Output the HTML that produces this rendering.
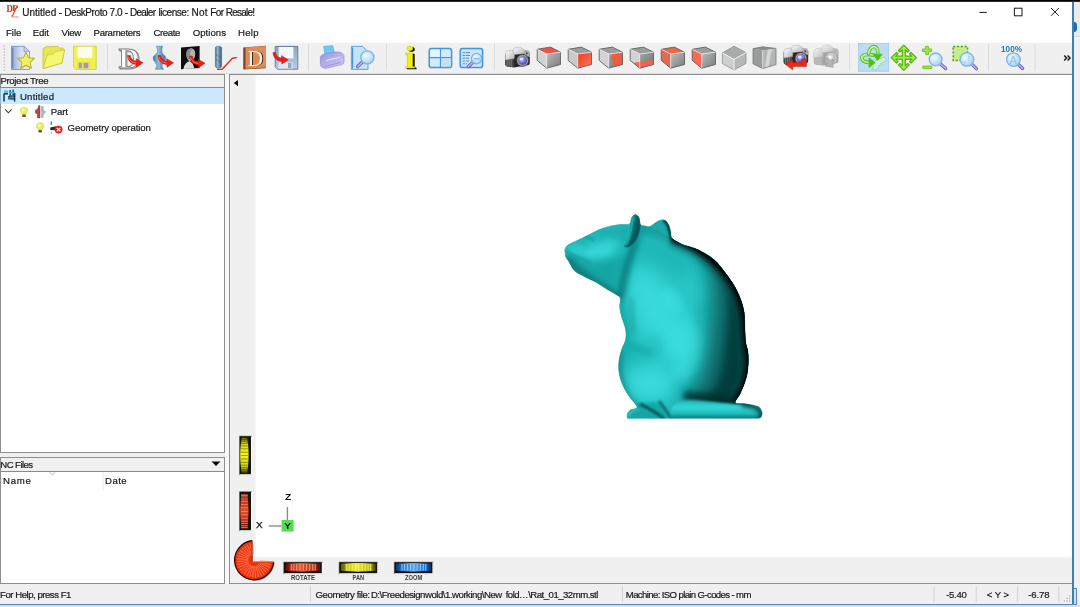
<!DOCTYPE html>
<html><head><meta charset="utf-8"><title>Untitled - DeskProto 7.0</title>
<style>
html,body{margin:0;padding:0;}
body{width:1080px;height:607px;overflow:hidden;background:#f6f6f6;position:relative;font-family:"Liberation Sans","DejaVu Sans",sans-serif;color:#151515;font-size:9.3px;}
div,svg{position:absolute;}
.t{opacity:.99;white-space:pre;line-height:12px;-webkit-text-stroke:.2px #151515;}
#win{left:0;top:0;width:1073px;height:604px;background:#f0f0f0;overflow:hidden;}
#topline{left:0;top:0;width:1080px;height:2px;background:linear-gradient(#000 0,#000 60%,#777 100%);}
#titlebar{left:0;top:0;width:1073px;height:24px;background:#fff;}
#menubar{left:0;top:24px;width:1073px;height:18px;background:#fff;}
#toolbar{left:0;top:42px;width:1073px;height:32px;background:#f0f0f0;}
#tree{left:0;top:74px;width:225px;height:379px;background:#fff;border:1px solid #8e8e8e;box-sizing:border-box;}
#treehead{left:0;top:0;width:223px;height:12px;background:#f0f0f0;border-bottom:1px solid #848a90;}
#sel{left:0;top:13px;width:223px;height:16px;background:#cce8ff;}
#nc{left:0;top:457px;width:225px;height:127px;background:#fff;border:1px solid #8e8e8e;box-sizing:border-box;}
#nchead{left:0;top:0;width:223px;height:13px;background:#f0f0f0;border-bottom:1px solid #848a90;}
#view{overflow:hidden;left:229px;top:74px;width:844px;height:510px;background:#f0f0f0;border-left:1px solid #8e8e8e;border-top:1px solid #8e8e8e;border-bottom:1px solid #8e8e8e;box-sizing:border-box;}
#canvas{left:26px;top:0;width:817px;height:482px;background:#fff;box-shadow:0 0 2px 0px #fff;}
#status{left:0;top:584px;width:1073px;height:20px;background:#f0f0f0;}
#rb{left:1072.4px;top:1px;width:1.5px;height:604px;background:#3f7fb4;}
#bb{left:0;top:603.7px;width:1077px;height:1.6px;background:#4a8cc4;}
#bg1{left:1074px;top:0;width:6px;height:36px;background:#ebebeb;border-bottom:1px solid #dcdcdc;}
#bg2{left:1074px;top:37px;width:6px;height:570px;background:#f1f1f1;}
#bg3{left:0;top:605.2px;width:1080px;height:2px;background:#dedede;}
#blob{left:1073.5px;top:21.6px;width:3.6px;height:10px;border-radius:0 4px 4px 0/0 5px 5px 0;background:#1a6eae;}
#cb{left:1074px;top:588px;width:2.8px;height:17px;border:1px solid #4a8ac0;border-left:none;box-sizing:border-box;background:#cfe2f2;}

#gap{left:225px;top:75px;width:4px;height:509px;background:#f8f8f8;}
#tb,#ov{opacity:.995;}

</style></head><body>
<div id="win">
 <div id="titlebar"></div>
 <div id="menubar"></div>
 <div id="toolbar"><svg id="tb" style="left:0;top:0" width="1073" height="32" viewBox="0 42 1073 32">
<defs>
<linearGradient id="gdoc" x1="0" y1="0" x2="1" y2="0"><stop offset="0" stop-color="#92a8d8"/><stop offset=".5" stop-color="#d4dcf0"/><stop offset="1" stop-color="#eef1f9"/></linearGradient>
<radialGradient id="lens" cx=".38" cy=".35" r=".75"><stop offset="0" stop-color="#f2faff"/><stop offset=".6" stop-color="#bfe0f6"/><stop offset="1" stop-color="#9ccbee"/></radialGradient>
<radialGradient id="lensb" cx=".4" cy=".38" r=".7"><stop offset="0" stop-color="#d0d0ff"/><stop offset=".5" stop-color="#807ce0"/><stop offset="1" stop-color="#3c3894"/></radialGradient>
<radialGradient id="lensg" cx=".4" cy=".38" r=".7"><stop offset="0" stop-color="#f0f0f0"/><stop offset=".6" stop-color="#c4c4c4"/><stop offset="1" stop-color="#a0a0a0"/></radialGradient>
<linearGradient id="gsil" x1="0" y1="0" x2="1" y2="1"><stop offset="0" stop-color="#ffffff"/><stop offset="1" stop-color="#b4b4b4"/></linearGradient><linearGradient id="gsilg" x1="0" y1="0" x2="1" y2="1"><stop offset="0" stop-color="#f4f4f4"/><stop offset="1" stop-color="#c0c0c0"/></linearGradient><linearGradient id="gfr2" x1="0" y1="0" x2="1" y2="1"><stop offset="0" stop-color="#a4a6a6"/><stop offset="1" stop-color="#707272"/></linearGradient><linearGradient id="gfr" x1="0" y1="0" x2="1" y2="1"><stop offset="0" stop-color="#bcbebe"/><stop offset="1" stop-color="#787a7a"/></linearGradient>
<linearGradient id="gred" x1="0" y1="0" x2="1" y2="1"><stop offset="0" stop-color="#ee3a1c"/><stop offset="1" stop-color="#ff7a5c"/></linearGradient>
<linearGradient id="gvase" x1="0" y1="0" x2="1" y2="0"><stop offset="0" stop-color="#4278a6"/><stop offset=".42" stop-color="#94bcdc"/><stop offset="1" stop-color="#3e7098"/></linearGradient>
<linearGradient id="gtool" x1="0" y1="0" x2="1" y2="0"><stop offset="0" stop-color="#4a7894"/><stop offset=".35" stop-color="#90b6cc"/><stop offset="1" stop-color="#345a74"/></linearGradient>
<linearGradient id="gprn" x1="0" y1="0" x2="1" y2="1"><stop offset="0" stop-color="#9a92dc"/><stop offset="1" stop-color="#d2cff4"/></linearGradient>
<linearGradient id="gflop" x1="0" y1="0" x2="0" y2="1"><stop offset="0" stop-color="#8ea6c6"/><stop offset="1" stop-color="#b9cbe0"/></linearGradient>
</defs>
<rect x="0" y="42" width="1073" height="1" fill="#fbfbfb"/>
<rect x="0" y="73.7" width="1073" height=".5" fill="#b0b0b0"/>
<rect x="3.6" y="45.5" width="1.2" height="1.2" fill="#b4b4b4"/><rect x="3.6" y="48.5" width="1.2" height="1.2" fill="#b4b4b4"/><rect x="3.6" y="51.5" width="1.2" height="1.2" fill="#b4b4b4"/><rect x="3.6" y="54.5" width="1.2" height="1.2" fill="#b4b4b4"/><rect x="3.6" y="57.5" width="1.2" height="1.2" fill="#b4b4b4"/><rect x="3.6" y="60.5" width="1.2" height="1.2" fill="#b4b4b4"/><rect x="3.6" y="63.5" width="1.2" height="1.2" fill="#b4b4b4"/><rect x="3.6" y="66.5" width="1.2" height="1.2" fill="#b4b4b4"/><rect x="3.6" y="69.5" width="1.2" height="1.2" fill="#b4b4b4"/>
<path d="M11.5,46.3 L24,46.3 L29.5,51.5 L29.5,69.5 L11.5,69.5Z" fill="url(#gdoc)" stroke="#6f8cc4" stroke-width=".8"/><path d="M24,46.3 L24,51.5 L29.5,51.5Z" fill="#c9d3ec" stroke="#6f8cc4" stroke-width=".6"/><path d="M12.8,48 L12.8,68" stroke="#5576b8" stroke-width="1"/><path d="M26,52.6 L28.3,58 L34.2,58.5 L29.7,62.3 L31.2,68.1 L26,65 L20.8,68.1 L22.3,62.3 L17.8,58.5 L23.7,58Z" fill="#eff05c" stroke="#b4b630" stroke-width="1.5" stroke-linejoin="round"/><path d="M26,54.6 L27.8,58.8 L32.2,59.2 L28.9,62 L30,66.2 L26,63.8 L22,66.2 L23.1,62 L19.8,59.2 L24.2,58.8Z" fill="#f2f362" stroke="#f2f362" stroke-width="1" stroke-linejoin="round"/>
<path d="M43,48.5 L46.5,46.8 L57.5,46.4 L60.5,48.3 L62.5,47.8 L64.2,50.3 L62,63 L43,68.6Z" fill="#e8e84e" stroke="#c2c232" stroke-width=".8" stroke-linejoin="round"/><path d="M43,68.6 L47.2,54.8 L53.5,53.8 L55.8,51.2 L64.6,49.8 L62,63Z" fill="#f7f774" stroke="#c6c636" stroke-width=".8" stroke-linejoin="round"/>
<path d="M73.5,46.2 L96.2,46.2 L96.2,69.4 L75.8,69.4 L73.5,67.2Z" fill="#f0f04e" stroke="#cfcf3a" stroke-width=".8"/><rect x="77.4" y="46.8" width="15" height="11" fill="#fdfdf4"/><rect x="77.2" y="62" width="13.2" height="6.6" fill="#e2e26a"/><rect x="78.8" y="62.8" width="3" height="5.4" fill="#a897b4"/><rect x="83.6" y="62.8" width="4.6" height="5.4" fill="#a897b4"/>
<rect x="107.0" y="44" width="1" height="27" fill="#dcdcdc"/>
<text x="119.6" y="69" font-family="Liberation Serif,serif" font-weight="bold" font-size="29" fill="#d8d8d8" stroke="#8a8a8a" stroke-width=".9" textLength="21" lengthAdjust="spacingAndGlyphs">D</text><text x="118.6" y="68.2" font-family="Liberation Serif,serif" font-weight="bold" font-size="29" fill="#fbfbfb" stroke="#7e7e7e" stroke-width=".9" textLength="21" lengthAdjust="spacingAndGlyphs">D</text>
<g transform="translate(127.5 55.5) scale(1.0)"><path d="M0,0 C0.5,5 3,8.5 9,9 L9,11.8 L15.5,7.3 L8.6,3.2 L8.8,5.6 C5.5,5.4 3.2,3.5 2.8,0Z" fill="#e8201a" stroke="#b01008" stroke-width=".5"/><path d="M1,1.5 C1.8,4.8 4,7 8.6,7.4" fill="none" stroke="#ff8a70" stroke-width=".9" opacity=".8"/></g>
<path d="M156.3,46.2 L162.6,46.2 L162.2,47.6 C161.6,49.4 161.8,51 162.2,52.4 C162.8,54.4 165.8,55.6 165.7,58 C165.6,60.4 163.4,62.4 162.4,64.4 C161.8,65.8 162,66.8 163,68 L163.4,69.3 L155.4,69.3 L155.8,68 C156.8,66.8 157,65.8 156.4,64.4 C155.4,62.4 153,60.4 153,58 C153,55.6 156.4,54.4 157.2,52.4 C157.8,51 157.6,49.4 156.8,47.6Z" fill="url(#gvase)" stroke="#4c7ca6" stroke-width=".5"/>
<g transform="translate(158 55.5) scale(1.0)"><path d="M0,0 C0.5,5 3,8.5 9,9 L9,11.8 L15.5,7.3 L8.6,3.2 L8.8,5.6 C5.5,5.4 3.2,3.5 2.8,0Z" fill="#e8201a" stroke="#b01008" stroke-width=".5"/><path d="M1,1.5 C1.8,4.8 4,7 8.6,7.4" fill="none" stroke="#ff8a70" stroke-width=".9" opacity=".8"/></g>
<path d="M181,47.4 L199.6,45.9 L199.6,68 L181,69.2Z" fill="#0c0c0c"/><path d="M187,51 C188.4,47.8 193.6,47.4 194.8,51 C195.8,54.2 195,58 193,60.4 C191.4,62 188.8,61.4 187.8,59.6 C186.2,57 186,53.4 187,51Z" fill="#b4b4b4"/><path d="M187,51 C188,48.4 191,47.6 192.6,48.6 C190.4,50.4 189.6,54 190,58.6 L188,59.8 C186.2,57 186,53.4 187,51Z" fill="#8c8c8c"/><path d="M183.4,69 C184,64.6 186.6,62 189.6,61 L192.6,63.4 L194.6,68.4Z" fill="#dadada"/>
<g transform="translate(189.5 56) scale(1.0)"><path d="M0,0 C0.5,5 3,8.5 9,9 L9,11.8 L15.5,7.3 L8.6,3.2 L8.8,5.6 C5.5,5.4 3.2,3.5 2.8,0Z" fill="#e8201a" stroke="#b01008" stroke-width=".5"/><path d="M1,1.5 C1.8,4.8 4,7 8.6,7.4" fill="none" stroke="#ff8a70" stroke-width=".9" opacity=".8"/></g>
<path d="M215.4,47.8 C215.4,45.6 221.6,45.6 221.6,47.8 L221.6,66.2 C221.6,68.8 215.4,68.8 215.4,66.2Z" fill="url(#gtool)" stroke="#385e7a" stroke-width=".5"/><path d="M215.8,54 L221.2,58 M215.8,59 L221.2,63" stroke="#2f556f" stroke-width=".7" opacity=".6"/><path d="M217.6,69.4 L222.2,69.2 L232.4,58.3 L236.4,57.6" fill="none" stroke="#e0281c" stroke-width="1.4" stroke-linejoin="round" stroke-linecap="round"/>
<path d="M243.2,47.4 L266,45.8 L266,68.2 L243.2,69.6Z" fill="#7a4a32"/><path d="M245.6,47.6 L266,46 L266,67.6 L245.6,68.8Z" fill="#e28a54"/><text x="248.6" y="66.4" font-family="Liberation Serif,serif" font-size="22.5" fill="#3a2418" textLength="15.6" lengthAdjust="spacingAndGlyphs">D</text><text x="247.6" y="66" font-family="Liberation Serif,serif" font-size="22.5" fill="#fbf6f0" textLength="15.6" lengthAdjust="spacingAndGlyphs">D</text>
<path d="M275.2,46.4 L297.8,46.4 L297.8,69.2 L277.4,69.2 L275.2,67Z" fill="url(#gflop)" stroke="#5b7696" stroke-width=".9"/><rect x="278.8" y="47" width="14.6" height="11.4" fill="#f6fafd"/><rect x="278.6" y="62.4" width="14" height="6.2" fill="#dfe8f2"/><rect x="288" y="63" width="3.4" height="5.2" fill="#8ea6c6"/>
<g transform="translate(273 52.5) scale(.98)"><path d="M0,0 C0.5,5 3,8.5 9,9 L9,11.8 L15.5,7.3 L8.6,3.2 L8.8,5.6 C5.5,5.4 3.2,3.5 2.8,0Z" fill="#e8201a" stroke="#b01008" stroke-width=".5"/></g>
<rect x="308.0" y="44" width="1" height="27" fill="#dcdcdc"/>
<path d="M323.4,46.4 L332.6,45.6 L334.6,52.6 L325,55Z" fill="#6ec6f2" stroke="#4aa6dc" stroke-width=".5"/><path d="M320.4,57.4 C320.4,55.6 322,54.6 324,54.2 L336,52 C340,51.4 344,53.4 344,56.4 L344,62 C344,63.4 343,64.2 341.6,64.6 L327.6,68 C324,68.8 320.4,67 320.4,64.4Z" fill="url(#gprn)" stroke="#8a82cc" stroke-width=".6"/><path d="M326,60.5 L340,57.2" stroke="#efeefc" stroke-width="1" opacity=".9"/><path d="M324,66.6 L341,62.4" stroke="#8078c4" stroke-width=".8" opacity=".7"/>
<path d="M351.4,46.4 L362.6,46.4 L368,51.6 L368,69.4 L351.4,69.4Z" fill="#c4e2f9" stroke="#4f9fe0" stroke-width=".9"/><path d="M352.6,47.4 L352.6,68.4" stroke="#3f8fd6" stroke-width="1.1"/>
<line x1="362.4" y1="62.1" x2="357.6" y2="66.6" stroke="#6a62c8" stroke-width="3.4" stroke-linecap="round"/><line x1="362.4" y1="62.1" x2="357.6" y2="66.6" stroke="#b4aef0" stroke-width="1.6" stroke-linecap="round"/><circle cx="367.4" cy="57.4" r="6.6" fill="url(#lens)" stroke="#7fb4e6" stroke-width="1.3"/>
<rect x="386.0" y="44" width="1" height="27" fill="#dcdcdc"/>
<text x="406.2" y="69.2" font-family="Liberation Serif,serif" font-weight="bold" font-size="31" fill="#101010" stroke="#101010" stroke-width=".5" textLength="10.5" lengthAdjust="spacingAndGlyphs">i</text><text x="404.4" y="68" font-family="Liberation Serif,serif" font-weight="bold" font-size="31" fill="#f4f400" stroke="#c8c800" stroke-width=".4" textLength="10.5" lengthAdjust="spacingAndGlyphs">i</text>
<rect x="429.2" y="48.6" width="22.4" height="19" rx="2.4" fill="#d5eafa" stroke="#3a98e4" stroke-width="1.5"/><path d="M440.4,49 L440.4,67.4 M429.4,57.6 L451.4,57.6" stroke="#3a98e4" stroke-width="1.1"/><rect x="430.4" y="49.8" width="9.2" height="7" fill="#e6f3fd"/><rect x="441.2" y="58.4" width="9.4" height="8" fill="#c4e0f8"/>
<rect x="460.2" y="48.6" width="22.4" height="19" rx="2.4" fill="#cfe6f9" stroke="#3a98e4" stroke-width="1.5"/><path d="M462.6,52.6 L470,52.6 M462.6,55.4 L470,55.4 M462.6,58.2 L469,58.2 M462.6,61 L469,61 M462.6,63.8 L467,63.8" stroke="#3f7fc4" stroke-width=".9"/><path d="M465.4,51 L465.4,65" stroke="#cfe6f9" stroke-width=".8"/>
<line x1="472.6" y1="62.4" x2="468.4" y2="66.4" stroke="#6a62c8" stroke-width="3.4" stroke-linecap="round"/><line x1="472.6" y1="62.4" x2="468.4" y2="66.4" stroke="#b4aef0" stroke-width="1.6" stroke-linecap="round"/><circle cx="476.6" cy="58.6" r="5.2" fill="url(#lens)" stroke="#7fb4e6" stroke-width="1.3"/><path d="M473.6,58.8 L479.6,58.8" stroke="#6aa8e0" stroke-width="1"/>
<rect x="494.0" y="44" width="1" height="27" fill="#dcdcdc"/>
<g transform="translate(505 47)"><path d="M0.2,7 L0.2,17 Q0.2,19 2,19.4 L9,20.4 L23.6,18 Q24.8,17.6 24.8,16 L24.8,6Z" fill="#262626"/><path d="M0.4,13 L8.6,12 L8.6,20.2 L2,19.2 Q0.4,18.8 0.4,17Z" fill="#4a4a4a"/><path d="M2.2,12.8 L2.2,19 M4.2,12.6 L4.2,19.4 M6.2,12.4 L6.2,19.8" stroke="#a8a8a8" stroke-width=".7" opacity=".7"/><path d="M0.4,6.4 Q0.6,4 3,3.5 L8,3 L9.4,6 L9.2,11.6 L0.4,13Z" fill="url(#gsil)" stroke="#a8a8a8" stroke-width=".5"/><path d="M8,3.4 L9.2,1 Q12,0 15.4,0.3 L19,2.6 L19.6,6.6 L9,7.6Z" fill="url(#gsil)" stroke="#a8a8a8" stroke-width=".5"/><path d="M19,3 L23.4,3.5 Q24.8,4 24.8,6 L24.8,10 L19.4,9Z" fill="#a8a8a8"/><rect x="21" y="5.6" width="1.6" height="1.6" fill="#3c3c3c"/><circle cx="17.6" cy="13.4" r="6" fill="#9c9c9c" stroke="#3c3c3c" stroke-width=".8"/><circle cx="17.6" cy="13.4" r="4.3" fill="url(#lensb)"/><ellipse cx="16.4" cy="12" rx="1.7" ry="1.2" fill="#fff" opacity=".7"/></g>
<polygon points="537.2,49.3 550.4,47.1 560.5,52.2 546.7,54.0" fill="#f2504a"/><polygon points="537.2,49.3 546.7,54.0 546.7,68.2 537.2,60.4" fill="#d2d4d4"/><polygon points="546.7,54.0 560.5,52.2 560.5,64.5 546.7,68.2" fill="url(#gfr)"/><polygon points="537.2,49.3 550.4,47.1 560.5,52.2 560.5,64.5 546.7,68.2 537.2,60.4" fill="none" stroke="#626262" stroke-width=".9" stroke-linejoin="round"/><polyline points="537.2,49.3 546.7,54.0 560.5,52.2" fill="none" stroke="#f4f4f4" stroke-width=".8" opacity=".85"/><line x1="546.7" y1="54.0" x2="546.7" y2="68.2" stroke="#f4f4f4" stroke-width=".8" opacity=".85"/>
<polygon points="568.2,49.3 581.4,47.1 591.5,52.2 577.7,54.0" fill="#9c9e9e"/><polygon points="568.2,49.3 577.7,54.0 577.7,68.2 568.2,60.4" fill="#c9cbcb"/><polygon points="577.7,54.0 591.5,52.2 591.5,64.5 577.7,68.2" fill="url(#gred)"/><polygon points="568.2,49.3 581.4,47.1 591.5,52.2 591.5,64.5 577.7,68.2 568.2,60.4" fill="none" stroke="#626262" stroke-width=".9" stroke-linejoin="round"/><polyline points="568.2,49.3 577.7,54.0 591.5,52.2" fill="none" stroke="#f4f4f4" stroke-width=".8" opacity=".85"/><line x1="577.7" y1="54.0" x2="577.7" y2="68.2" stroke="#f4f4f4" stroke-width=".8" opacity=".85"/>
<polygon points="599.2,49.3 612.4,47.1 622.5,52.2 608.7,54.0" fill="#9c9e9e"/><polygon points="599.2,49.3 608.7,54.0 608.7,68.2 599.2,60.4" fill="#d2d4d4"/><polygon points="608.7,54.0 622.5,52.2 622.5,64.5 608.7,68.2" fill="url(#gfr2)"/><polygon points="612,54 622.6,53.4 622.6,64.2 614.5,66.4 610.5,58" fill="#f4583c" opacity=".9" transform="translate(62.2 0) translate(-62 0)"/><polygon points="599.2,49.3 612.4,47.1 622.5,52.2 622.5,64.5 608.7,68.2 599.2,60.4" fill="none" stroke="#626262" stroke-width=".9" stroke-linejoin="round"/><polyline points="599.2,49.3 608.7,54.0 622.5,52.2" fill="none" stroke="#f4f4f4" stroke-width=".8" opacity=".85"/><line x1="608.7" y1="54.0" x2="608.7" y2="68.2" stroke="#f4f4f4" stroke-width=".8" opacity=".85"/>
<polygon points="630.2,49.3 643.4,47.1 653.5,52.2 639.7,54.0" fill="#9c9e9e"/><polygon points="630.2,49.3 639.7,54.0 639.7,68.2 630.2,60.4" fill="#d2d4d4"/><polygon points="639.7,54.0 653.5,52.2 653.5,64.5 639.7,68.2" fill="url(#gfr2)"/><polygon points="640.5,61.5 653.6,60 653.6,64.2 639.7,68.2 633,63" fill="#f4624a" opacity=".92" transform="translate(93.2 0) translate(-93 0)"/><polygon points="630.2,49.3 643.4,47.1 653.5,52.2 653.5,64.5 639.7,68.2 630.2,60.4" fill="none" stroke="#626262" stroke-width=".9" stroke-linejoin="round"/><polyline points="630.2,49.3 639.7,54.0 653.5,52.2" fill="none" stroke="#f4f4f4" stroke-width=".8" opacity=".85"/><line x1="639.7" y1="54.0" x2="639.7" y2="68.2" stroke="#f4f4f4" stroke-width=".8" opacity=".85"/>
<polygon points="661.2,49.3 674.4,47.1 684.5,52.2 670.7,54.0" fill="#e8684c"/><polygon points="661.2,49.3 670.7,54.0 670.7,68.2 661.2,60.4" fill="#e06a52"/><polygon points="670.7,54.0 684.5,52.2 684.5,64.5 670.7,68.2" fill="url(#gfr)"/><polygon points="670.8,55.2 684.6,53.2 684.6,64.2 670.8,68.2" fill="url(#gfr)" transform="translate(124.2 0) translate(-124 0)"/><polygon points="661.2,49.3 674.4,47.1 684.5,52.2 684.5,64.5 670.7,68.2 661.2,60.4" fill="none" stroke="#626262" stroke-width=".9" stroke-linejoin="round"/><polyline points="661.2,49.3 670.7,54.0 684.5,52.2" fill="none" stroke="#f4f4f4" stroke-width=".8" opacity=".85"/><line x1="670.7" y1="54.0" x2="670.7" y2="68.2" stroke="#f4f4f4" stroke-width=".8" opacity=".85"/>
<polygon points="692.2,49.3 705.4,47.1 715.5,52.2 701.7,54.0" fill="#9c9e9e"/><polygon points="692.2,49.3 701.7,54.0 701.7,68.2 692.2,60.4" fill="#fa6a50"/><polygon points="701.7,54.0 715.5,52.2 715.5,64.5 701.7,68.2" fill="url(#gfr)"/><polygon points="692.2,49.3 705.4,47.1 715.5,52.2 715.5,64.5 701.7,68.2 692.2,60.4" fill="none" stroke="#626262" stroke-width=".9" stroke-linejoin="round"/><polyline points="692.2,49.3 701.7,54.0 715.5,52.2" fill="none" stroke="#f4f4f4" stroke-width=".8" opacity=".85"/><line x1="701.7" y1="54.0" x2="701.7" y2="68.2" stroke="#f4f4f4" stroke-width=".8" opacity=".85"/>
<polygon points="734,46.2 746,52.6 734,59.4 722.4,52.8" fill="#a9abab"/><polygon points="722.4,52.8 734,59.4 734,70 722.4,63.6" fill="#cdcfcf"/><polygon points="746,52.6 734,59.4 734,70 746,63.4" fill="#b6b8b8"/><polygon points="734,46.2 746,52.6 746,63.4 734,70 722.4,63.6 722.4,52.8" fill="none" stroke="#8a8a8a" stroke-width=".7"/><path d="M722.4,52.8 L734,59.4 L746,52.6 M734,59.4 L734,70" stroke="#f6f6f6" stroke-width=".9" fill="none"/>
<polygon points="753,48.6 763,46.8 776,48.4 762.6,50.4" fill="#8c8e8e"/><polygon points="753,48.6 762.6,50.4 762.6,68.6 753,63.8" fill="#9a9c9c"/><polygon points="762.6,50.4 776,48.4 776,64.6 762.6,68.6" fill="#b4b6b6"/><polygon points="768,49.8 772,49.2 768.6,66.8 764.6,68" fill="#dcdede" opacity=".8"/><polygon points="753,48.6 763,46.8 776,48.4 776,64.6 762.6,68.6 753,63.8" fill="none" stroke="#6e6e6e" stroke-width=".7"/><path d="M762.6,50.4 L762.6,68.6" stroke="#e6e6e6" stroke-width=".7"/>
<g transform="translate(783.4 45)"><path d="M0.2,7 L0.2,17 Q0.2,19 2,19.4 L9,20.4 L23.6,18 Q24.8,17.6 24.8,16 L24.8,6Z" fill="#262626"/><path d="M0.4,13 L8.6,12 L8.6,20.2 L2,19.2 Q0.4,18.8 0.4,17Z" fill="#4a4a4a"/><path d="M2.2,12.8 L2.2,19 M4.2,12.6 L4.2,19.4 M6.2,12.4 L6.2,19.8" stroke="#a8a8a8" stroke-width=".7" opacity=".7"/><path d="M0.4,6.4 Q0.6,4 3,3.5 L8,3 L9.4,6 L9.2,11.6 L0.4,13Z" fill="url(#gsil)" stroke="#a8a8a8" stroke-width=".5"/><path d="M8,3.4 L9.2,1 Q12,0 15.4,0.3 L19,2.6 L19.6,6.6 L9,7.6Z" fill="url(#gsil)" stroke="#a8a8a8" stroke-width=".5"/><path d="M19,3 L23.4,3.5 Q24.8,4 24.8,6 L24.8,10 L19.4,9Z" fill="#a8a8a8"/><rect x="21" y="5.6" width="1.6" height="1.6" fill="#3c3c3c"/><circle cx="17.6" cy="13.4" r="6" fill="#9c9c9c" stroke="#3c3c3c" stroke-width=".8"/><circle cx="17.6" cy="13.4" r="4.3" fill="url(#lensb)"/><ellipse cx="16.4" cy="12" rx="1.7" ry="1.2" fill="#fff" opacity=".7"/></g>
<path d="M801.6,59.2 L806.4,59.2 L806.4,66.6 L792.8,66.6 L792.8,69.8 L785.6,64.6 L792.8,59.6 L792.8,62.6 L801.6,62.6Z" fill="#ec2a1a" stroke="#b01208" stroke-width=".5"/>
<g transform="translate(813.6 45)"><path d="M0.2,7 L0.2,17 Q0.2,19 2,19.4 L9,20.4 L23.6,18 Q24.8,17.6 24.8,16 L24.8,6Z" fill="#a6a6a6"/><path d="M0.4,13 L8.6,12 L8.6,20.2 L2,19.2 Q0.4,18.8 0.4,17Z" fill="#b6b6b6"/><path d="M2.2,12.8 L2.2,19 M4.2,12.6 L4.2,19.4 M6.2,12.4 L6.2,19.8" stroke="#bcbcbc" stroke-width=".7" opacity=".7"/><path d="M0.4,6.4 Q0.6,4 3,3.5 L8,3 L9.4,6 L9.2,11.6 L0.4,13Z" fill="url(#gsilg)" stroke="#bcbcbc" stroke-width=".5"/><path d="M8,3.4 L9.2,1 Q12,0 15.4,0.3 L19,2.6 L19.6,6.6 L9,7.6Z" fill="url(#gsilg)" stroke="#bcbcbc" stroke-width=".5"/><path d="M19,3 L23.4,3.5 Q24.8,4 24.8,6 L24.8,10 L19.4,9Z" fill="#bcbcbc"/><rect x="21" y="5.6" width="1.6" height="1.6" fill="#9a9a9a"/><circle cx="17.6" cy="13.4" r="6" fill="#cfcfcf" stroke="#9a9a9a" stroke-width=".8"/><circle cx="17.6" cy="13.4" r="4.3" fill="url(#lensg)"/><ellipse cx="16.4" cy="12" rx="1.7" ry="1.2" fill="#fff" opacity=".7"/></g>
<path d="M827,58 L831.2,58 L831.2,62.6 L834.6,62.6 L829.4,69 L824,62.6 L827,62.6Z" fill="#b4b4b4" stroke="#8e8e8e" stroke-width=".5" transform="rotate(-40 829 63)"/>
<rect x="849.0" y="44" width="1" height="27" fill="#dcdcdc"/>
<rect x="858" y="43" width="31" height="28.6" fill="#bcdcf4"/><rect x="858.4" y="43.4" width="30.2" height="27.8" fill="none" stroke="#a8cdea" stroke-width=".8"/>
<path d="M875,60.5 L884.6,57 L886.4,60 L879.4,64.8 L877,70 L872.4,69.4 L873.6,64.6" fill="#d2ecf4" stroke="#8fdc58" stroke-width="1" stroke-dasharray="2 .8" stroke-linejoin="round" opacity=".95"/>
<path d="M873.2,55 C866,53.4 861.6,55.4 861.8,58 C862,61 866,62.4 870,62.6" fill="none" stroke="#4fc010" stroke-width="3.5" stroke-linecap="round" stroke-linejoin="round"/><path d="M873.2,55 C866,53.4 861.6,55.4 861.8,58 C862,61 866,62.4 870,62.6" fill="none" stroke="#c4f0a8" stroke-width="1.7" stroke-linecap="round" stroke-linejoin="round"/>
<path d="M868.6,54 C868.8,49.4 871.4,46.6 874,46.6 C876.6,46.6 878.2,50 878,55" fill="none" stroke="#4fc010" stroke-width="3.5" stroke-linecap="round" stroke-linejoin="round"/><path d="M868.6,54 C868.8,49.4 871.4,46.6 874,46.6 C876.6,46.6 878.2,50 878,55" fill="none" stroke="#c4f0a8" stroke-width="1.7" stroke-linecap="round" stroke-linejoin="round"/>
<path d="M873,54.2 L882,54.2 L877.6,60.4Z" fill="#4fc010" stroke="#4fc010" stroke-width=".8" stroke-linejoin="round"/>
<path d="M869,58 L869,67.4 L875.2,62.6Z" fill="#4fc010" stroke="#4fc010" stroke-width=".8" stroke-linejoin="round"/>
<path d="M903.8,45.1 L909.2,50.5 L907.7,52.0 L905.3,49.6 L905.3,56.2 L911.9,56.2 L909.5,53.8 L911.0,52.3 L916.4,57.7 L911.0,63.1 L909.5,61.6 L911.9,59.2 L905.3,59.2 L905.3,65.8 L907.7,63.4 L909.2,64.9 L903.8,70.3 L898.4,64.9 L899.9,63.4 L902.3,65.8 L902.3,59.2 L895.7,59.2 L898.1,61.6 L896.6,63.1 L891.2,57.7 L896.6,52.3 L898.1,53.8 L895.7,56.2 L902.3,56.2 L902.3,49.6 L899.9,52.0 L898.4,50.5Z" fill="#a4f044" stroke="#52b00e" stroke-width="1.2" stroke-linejoin="round"/>
<path d="M925.6,46.4 L928.4,46.4 L928.4,49 L931.6,49 L931.6,51.6 L928.4,51.6 L928.4,54.6 L925.6,54.6 L925.6,51.6 L922.4,51.6 L922.4,49 L925.6,49Z" fill="#9be83c" stroke="#62bc16" stroke-width=".8"/><rect x="922.6" y="66" width="9.2" height="2.6" rx=".8" fill="#9be83c" stroke="#62bc16" stroke-width=".8"/>
<line x1="940.6" y1="63.9" x2="945.6" y2="68.4" stroke="#6a62c8" stroke-width="3.4" stroke-linecap="round"/><line x1="940.6" y1="63.9" x2="945.6" y2="68.4" stroke="#b4aef0" stroke-width="1.6" stroke-linecap="round"/><circle cx="935.6" cy="59.4" r="6.4" fill="url(#lens)" stroke="#7fb4e6" stroke-width="1.3"/>
<rect x="953.2" y="46.6" width="14.4" height="13.8" fill="#c4ee88" stroke="#5aa010" stroke-width="1.5" stroke-dasharray="2.2 1.6"/>
<line x1="972.1" y1="64.4" x2="976.4" y2="68.6" stroke="#6a62c8" stroke-width="3.4" stroke-linecap="round"/><line x1="972.1" y1="64.4" x2="976.4" y2="68.6" stroke="#b4aef0" stroke-width="1.6" stroke-linecap="round"/><circle cx="967" cy="59.4" r="6.8" fill="url(#lens)" stroke="#7fb4e6" stroke-width="1.3"/><path d="M962.4,62 L966,62 M968.4,56 L968.4,62.4" stroke="#8ab8e0" stroke-width=".9" stroke-dasharray="1 1"/>
<rect x="988.0" y="44" width="1" height="27" fill="#dcdcdc"/>
<text x="1001" y="52.2" font-family="Liberation Sans,sans-serif" font-weight="bold" font-size="8.6" fill="#2a78c4" textLength="21" lengthAdjust="spacingAndGlyphs">100%</text>
<line x1="1018.5" y1="64.5" x2="1022.6" y2="68.4" stroke="#6a62c8" stroke-width="3.4" stroke-linecap="round"/><line x1="1018.5" y1="64.5" x2="1022.6" y2="68.4" stroke="#b4aef0" stroke-width="1.6" stroke-linecap="round"/><circle cx="1013.4" cy="59.6" r="6.8" fill="url(#lens)" stroke="#7fb4e6" stroke-width="1.3"/><text x="1009.4" y="63.6" font-family="Liberation Sans,sans-serif" font-size="11" fill="#9cc4e8" stroke="#9cc4e8" stroke-width=".3">A</text>
<rect x="1034.5" y="44" width="1" height="27" fill="#dcdcdc"/>
<path d="M1064.2,55.6 L1066.6,58 L1064.2,60.4 M1067.6,55.6 L1070,58 L1067.6,60.4" fill="none" stroke="#111" stroke-width="1.4"/>
</svg></div>
 <div id="tree"><div id="treehead"></div><div id="sel"></div></div>
 <div id="nc"><div id="nchead"></div></div>
 <div id="view"><div id="canvas"></div></div>
 <div id="status"></div><div id="gap"></div>

<svg id="ov" style="left:0;top:0" width="1080" height="607" viewBox="0 0 1080 607">
<defs>
<linearGradient id="wy" x1="0" y1="0" x2="0" y2="1"><stop offset="0" stop-color="#6a6a00"/><stop offset=".18" stop-color="#d8d818"/><stop offset=".5" stop-color="#f6f628"/><stop offset=".82" stop-color="#d0d014"/><stop offset="1" stop-color="#5a5a00"/></linearGradient>
<linearGradient id="wr" x1="0" y1="0" x2="0" y2="1"><stop offset="0" stop-color="#4a0e04"/><stop offset=".2" stop-color="#c03216"/><stop offset=".5" stop-color="#e84c28"/><stop offset=".8" stop-color="#b42c14"/><stop offset="1" stop-color="#400c04"/></linearGradient>
<linearGradient id="hy" x1="0" y1="0" x2="1" y2="0"><stop offset="0" stop-color="#5a5a00"/><stop offset=".15" stop-color="#b8b810"/><stop offset=".45" stop-color="#ecec24"/><stop offset=".85" stop-color="#b4b40e"/><stop offset="1" stop-color="#505000"/></linearGradient>
<linearGradient id="hr" x1="0" y1="0" x2="1" y2="0"><stop offset="0" stop-color="#4a1006"/><stop offset=".15" stop-color="#b83018"/><stop offset=".45" stop-color="#e85430"/><stop offset=".85" stop-color="#b02c14"/><stop offset="1" stop-color="#4a1006"/></linearGradient>
<linearGradient id="hb" x1="0" y1="0" x2="1" y2="0"><stop offset="0" stop-color="#0a3a78"/><stop offset=".15" stop-color="#1c74d8"/><stop offset=".5" stop-color="#56a8f8"/><stop offset=".85" stop-color="#1c74d8"/><stop offset="1" stop-color="#0a3a78"/></linearGradient>
<radialGradient id="dial" cx=".5" cy=".5" r=".5"><stop offset="0" stop-color="#ee2c0c"/><stop offset=".8" stop-color="#f43a16"/><stop offset="1" stop-color="#e02808"/></radialGradient>
<filter id="wb" filterUnits="userSpaceOnUse" x="225" y="420" width="230" height="170"><feGaussianBlur stdDeviation=".5"/></filter>
</defs>
<g filter="url(#wb)">
<rect x="239.0" y="435.59999999999997" width="13.0" height="39.6" fill="#a4a4a4"/><rect x="240.2" y="436.8" width="12.0" height="38.6" fill="#fafafa"/><rect x="239.6" y="436.2" width="11.4" height="38" fill="#141408"/><path d="M241.79999999999998,437.8 L246.99999999999997,437.8 C249.09999999999997,447.59999999999997 249.09999999999997,462.8 246.99999999999997,472.59999999999997 L241.79999999999998,472.59999999999997 C239.7,462.8 239.7,447.59999999999997 241.79999999999998,437.8Z" fill="url(#wy)"/><rect x="240.99999999999997" y="438.9" width="6.8" height=".7" fill="#505000" opacity=".8"/><rect x="240.99999999999997" y="439.6" width="6.8" height=".7" fill="#505000" opacity=".8"/><rect x="240.99999999999997" y="441.0" width="6.8" height=".7" fill="#505000" opacity=".8"/><rect x="240.99999999999997" y="443.0" width="6.8" height=".7" fill="#505000" opacity=".8"/><rect x="240.99999999999997" y="445.6" width="6.8" height=".7" fill="#505000" opacity=".8"/><rect x="240.99999999999997" y="448.5" width="6.8" height=".7" fill="#505000" opacity=".8"/><rect x="240.99999999999997" y="451.8" width="6.8" height=".7" fill="#505000" opacity=".8"/><rect x="240.99999999999997" y="455.2" width="6.8" height=".7" fill="#505000" opacity=".8"/><rect x="240.99999999999997" y="458.6" width="6.8" height=".7" fill="#505000" opacity=".8"/><rect x="240.99999999999997" y="461.9" width="6.8" height=".7" fill="#505000" opacity=".8"/><rect x="240.99999999999997" y="464.8" width="6.8" height=".7" fill="#505000" opacity=".8"/><rect x="240.99999999999997" y="467.4" width="6.8" height=".7" fill="#505000" opacity=".8"/><rect x="240.99999999999997" y="469.4" width="6.8" height=".7" fill="#505000" opacity=".8"/><rect x="240.99999999999997" y="470.8" width="6.8" height=".7" fill="#505000" opacity=".8"/><rect x="240.99999999999997" y="471.5" width="6.8" height=".7" fill="#505000" opacity=".8"/>
<rect x="239.0" y="491.2" width="13.0" height="40.0" fill="#a4a4a4"/><rect x="240.2" y="492.40000000000003" width="12.0" height="39.0" fill="#fafafa"/><rect x="239.6" y="491.8" width="11.4" height="38.4" fill="#141408"/><path d="M241.79999999999998,493.40000000000003 L246.99999999999997,493.40000000000003 C249.09999999999997,503.32 249.09999999999997,518.6800000000001 246.99999999999997,528.6 L241.79999999999998,528.6 C239.7,518.6800000000001 239.7,503.32 241.79999999999998,493.40000000000003Z" fill="url(#wr)"/><rect x="240.99999999999997" y="494.5" width="6.8" height=".7" fill="#ffa888" opacity=".8"/><rect x="240.99999999999997" y="495.2" width="6.8" height=".7" fill="#ffa888" opacity=".8"/><rect x="240.99999999999997" y="496.6" width="6.8" height=".7" fill="#ffa888" opacity=".8"/><rect x="240.99999999999997" y="498.7" width="6.8" height=".7" fill="#ffa888" opacity=".8"/><rect x="240.99999999999997" y="501.2" width="6.8" height=".7" fill="#ffa888" opacity=".8"/><rect x="240.99999999999997" y="504.2" width="6.8" height=".7" fill="#ffa888" opacity=".8"/><rect x="240.99999999999997" y="507.5" width="6.8" height=".7" fill="#ffa888" opacity=".8"/><rect x="240.99999999999997" y="511.0" width="6.8" height=".7" fill="#ffa888" opacity=".8"/><rect x="240.99999999999997" y="514.5" width="6.8" height=".7" fill="#ffa888" opacity=".8"/><rect x="240.99999999999997" y="517.8" width="6.8" height=".7" fill="#ffa888" opacity=".8"/><rect x="240.99999999999997" y="520.8" width="6.8" height=".7" fill="#ffa888" opacity=".8"/><rect x="240.99999999999997" y="523.3" width="6.8" height=".7" fill="#ffa888" opacity=".8"/><rect x="240.99999999999997" y="525.4" width="6.8" height=".7" fill="#ffa888" opacity=".8"/><rect x="240.99999999999997" y="526.8" width="6.8" height=".7" fill="#ffa888" opacity=".8"/><rect x="240.99999999999997" y="527.5" width="6.8" height=".7" fill="#ffa888" opacity=".8"/>
<rect x="283.2" y="561.6" width="39.6" height="12.6" fill="#a4a4a4"/><rect x="284.40000000000003" y="562.8000000000001" width="38.6" height="11.6" fill="#fafafa"/><rect x="283.8" y="562.2" width="38" height="11" fill="#141010"/><path d="M285.40000000000003,563.8000000000001 C295.2,562.7 310.40000000000003,562.7 320.2,563.8000000000001 L320.2,570.8000000000001 C310.40000000000003,571.9000000000001 295.2,571.9000000000001 285.40000000000003,570.8000000000001Z" fill="url(#hr)"/><rect x="286.9" y="564.0000000000001" width="0.7" height="6.6" fill="#5a1408" opacity="0.6"/><rect x="287.6" y="564.0000000000001" width="0.7" height="6.6" fill="#5a1408" opacity="0.6"/><rect x="288.9" y="564.0000000000001" width="0.7" height="6.6" fill="#5a1408" opacity="0.6"/><rect x="290.9" y="564.0000000000001" width="1.0" height="6.6" fill="#ffc0a0" opacity="0.75"/><rect x="293.4" y="564.0000000000001" width="1.0" height="6.6" fill="#ffc0a0" opacity="0.75"/><rect x="296.3" y="564.0000000000001" width="1.0" height="6.6" fill="#ffc0a0" opacity="0.75"/><rect x="299.5" y="564.0000000000001" width="1.0" height="6.6" fill="#ffc0a0" opacity="0.75"/><rect x="302.8" y="564.0000000000001" width="1.0" height="6.6" fill="#ffc0a0" opacity="0.75"/><rect x="306.1" y="564.0000000000001" width="1.0" height="6.6" fill="#ffc0a0" opacity="0.75"/><rect x="309.3" y="564.0000000000001" width="1.0" height="6.6" fill="#ffc0a0" opacity="0.75"/><rect x="312.2" y="564.0000000000001" width="1.0" height="6.6" fill="#ffc0a0" opacity="0.75"/><rect x="314.7" y="564.0000000000001" width="1.0" height="6.6" fill="#ffc0a0" opacity="0.75"/><rect x="316.7" y="564.0000000000001" width="0.7" height="6.6" fill="#5a1408" opacity="0.6"/><rect x="318.0" y="564.0000000000001" width="0.7" height="6.6" fill="#5a1408" opacity="0.6"/><rect x="318.7" y="564.0000000000001" width="0.7" height="6.6" fill="#5a1408" opacity="0.6"/>
<rect x="338.59999999999997" y="561.6" width="39.6" height="12.6" fill="#a4a4a4"/><rect x="339.8" y="562.8000000000001" width="38.6" height="11.6" fill="#fafafa"/><rect x="339.2" y="562.2" width="38" height="11" fill="#141010"/><path d="M340.8,563.8000000000001 C350.59999999999997,562.7 365.8,562.7 375.59999999999997,563.8000000000001 L375.59999999999997,570.8000000000001 C365.8,571.9000000000001 350.59999999999997,571.9000000000001 340.8,570.8000000000001Z" fill="url(#hy)"/><rect x="342.3" y="564.0000000000001" width="0.7" height="6.6" fill="#5a5a00" opacity="0.6"/><rect x="343.0" y="564.0000000000001" width="0.7" height="6.6" fill="#5a5a00" opacity="0.6"/><rect x="344.3" y="564.0000000000001" width="0.7" height="6.6" fill="#5a5a00" opacity="0.6"/><rect x="346.3" y="564.0000000000001" width="1.0" height="6.6" fill="#ffff90" opacity="0.75"/><rect x="348.8" y="564.0000000000001" width="1.0" height="6.6" fill="#ffff90" opacity="0.75"/><rect x="351.7" y="564.0000000000001" width="1.0" height="6.6" fill="#ffff90" opacity="0.75"/><rect x="354.9" y="564.0000000000001" width="1.0" height="6.6" fill="#ffff90" opacity="0.75"/><rect x="358.2" y="564.0000000000001" width="1.0" height="6.6" fill="#ffff90" opacity="0.75"/><rect x="361.5" y="564.0000000000001" width="1.0" height="6.6" fill="#ffff90" opacity="0.75"/><rect x="364.7" y="564.0000000000001" width="1.0" height="6.6" fill="#ffff90" opacity="0.75"/><rect x="367.6" y="564.0000000000001" width="1.0" height="6.6" fill="#ffff90" opacity="0.75"/><rect x="370.1" y="564.0000000000001" width="1.0" height="6.6" fill="#ffff90" opacity="0.75"/><rect x="372.1" y="564.0000000000001" width="0.7" height="6.6" fill="#5a5a00" opacity="0.6"/><rect x="373.4" y="564.0000000000001" width="0.7" height="6.6" fill="#5a5a00" opacity="0.6"/><rect x="374.1" y="564.0000000000001" width="0.7" height="6.6" fill="#5a5a00" opacity="0.6"/>
<rect x="393.79999999999995" y="561.6" width="39.6" height="12.6" fill="#a4a4a4"/><rect x="395.0" y="562.8000000000001" width="38.6" height="11.6" fill="#fafafa"/><rect x="394.4" y="562.2" width="38" height="11" fill="#141010"/><path d="M396.0,563.8000000000001 C405.79999999999995,562.7 421.0,562.7 430.79999999999995,563.8000000000001 L430.79999999999995,570.8000000000001 C421.0,571.9000000000001 405.79999999999995,571.9000000000001 396.0,570.8000000000001Z" fill="url(#hb)"/><rect x="397.5" y="564.0000000000001" width="0.7" height="6.6" fill="#0a3a78" opacity="0.6"/><rect x="398.2" y="564.0000000000001" width="0.7" height="6.6" fill="#0a3a78" opacity="0.6"/><rect x="399.5" y="564.0000000000001" width="0.7" height="6.6" fill="#0a3a78" opacity="0.6"/><rect x="401.5" y="564.0000000000001" width="1.0" height="6.6" fill="#b8dcff" opacity="0.75"/><rect x="404.0" y="564.0000000000001" width="1.0" height="6.6" fill="#b8dcff" opacity="0.75"/><rect x="406.9" y="564.0000000000001" width="1.0" height="6.6" fill="#b8dcff" opacity="0.75"/><rect x="410.1" y="564.0000000000001" width="1.0" height="6.6" fill="#b8dcff" opacity="0.75"/><rect x="413.4" y="564.0000000000001" width="1.0" height="6.6" fill="#b8dcff" opacity="0.75"/><rect x="416.7" y="564.0000000000001" width="1.0" height="6.6" fill="#b8dcff" opacity="0.75"/><rect x="419.9" y="564.0000000000001" width="1.0" height="6.6" fill="#b8dcff" opacity="0.75"/><rect x="422.8" y="564.0000000000001" width="1.0" height="6.6" fill="#b8dcff" opacity="0.75"/><rect x="425.3" y="564.0000000000001" width="1.0" height="6.6" fill="#b8dcff" opacity="0.75"/><rect x="427.3" y="564.0000000000001" width="0.7" height="6.6" fill="#0a3a78" opacity="0.6"/><rect x="428.6" y="564.0000000000001" width="0.7" height="6.6" fill="#0a3a78" opacity="0.6"/><rect x="429.3" y="564.0000000000001" width="0.7" height="6.6" fill="#0a3a78" opacity="0.6"/>
<path d="M252.60000000000002,541.8000000000001 A19.6,19.6 0 1 0 274.6,563.6 L252.60000000000002,563.6Z" fill="#8a8a8a" opacity=".6"/>
<path d="M251.8,540.75 A19.6,19.6 0 1 0 273.7,562.4 L251.8,562.4Z" fill="url(#dial)" stroke="#2a0c08" stroke-width="1.3" stroke-linejoin="round"/>
<line x1="253.7" y1="554.2" x2="252.7" y2="542.7" stroke="#ff8a60" stroke-width=".9" opacity=".75"/>
<line x1="252.6" y1="554.4" x2="249.6" y2="543.2" stroke="#ff8a60" stroke-width=".9" opacity=".75"/>
<line x1="251.7" y1="554.8" x2="246.8" y2="544.2" stroke="#ff8a60" stroke-width=".9" opacity=".75"/>
<line x1="250.8" y1="555.3" x2="244.1" y2="545.8" stroke="#ff8a60" stroke-width=".9" opacity=".75"/>
<line x1="250.0" y1="556.0" x2="241.8" y2="547.8" stroke="#ff8a60" stroke-width=".9" opacity=".75"/>
<line x1="249.3" y1="556.8" x2="239.8" y2="550.1" stroke="#ff8a60" stroke-width=".9" opacity=".75"/>
<line x1="248.8" y1="557.7" x2="238.2" y2="552.8" stroke="#ff8a60" stroke-width=".9" opacity=".75"/>
<line x1="248.4" y1="558.6" x2="237.2" y2="555.6" stroke="#ff8a60" stroke-width=".9" opacity=".75"/>
<line x1="248.2" y1="559.7" x2="236.7" y2="558.7" stroke="#ff8a60" stroke-width=".9" opacity=".75"/>
<line x1="248.2" y1="560.7" x2="236.7" y2="561.7" stroke="#ff8a60" stroke-width=".9" opacity=".75"/>
<line x1="248.4" y1="561.8" x2="237.2" y2="564.8" stroke="#ff8a60" stroke-width=".9" opacity=".75"/>
<line x1="248.8" y1="562.7" x2="238.2" y2="567.6" stroke="#ff8a60" stroke-width=".9" opacity=".75"/>
<line x1="249.3" y1="563.6" x2="239.8" y2="570.3" stroke="#ff8a60" stroke-width=".9" opacity=".75"/>
<line x1="250.0" y1="564.4" x2="241.8" y2="572.6" stroke="#ff8a60" stroke-width=".9" opacity=".75"/>
<line x1="250.8" y1="565.1" x2="244.1" y2="574.6" stroke="#ff8a60" stroke-width=".9" opacity=".75"/>
<line x1="251.7" y1="565.6" x2="246.8" y2="576.2" stroke="#ff8a60" stroke-width=".9" opacity=".75"/>
<line x1="252.6" y1="566.0" x2="249.6" y2="577.2" stroke="#ff8a60" stroke-width=".9" opacity=".75"/>
<line x1="253.7" y1="566.2" x2="252.7" y2="577.7" stroke="#ff8a60" stroke-width=".9" opacity=".75"/>
<line x1="254.7" y1="566.2" x2="255.7" y2="577.7" stroke="#ff8a60" stroke-width=".9" opacity=".75"/>
<line x1="255.8" y1="566.0" x2="258.8" y2="577.2" stroke="#ff8a60" stroke-width=".9" opacity=".75"/>
<line x1="256.7" y1="565.6" x2="261.6" y2="576.2" stroke="#ff8a60" stroke-width=".9" opacity=".75"/>
<line x1="257.6" y1="565.1" x2="264.3" y2="574.6" stroke="#ff8a60" stroke-width=".9" opacity=".75"/>
<line x1="258.4" y1="564.4" x2="266.6" y2="572.6" stroke="#ff8a60" stroke-width=".9" opacity=".75"/>
<line x1="259.1" y1="563.6" x2="268.6" y2="570.3" stroke="#ff8a60" stroke-width=".9" opacity=".75"/>
<line x1="259.6" y1="562.7" x2="270.2" y2="567.6" stroke="#ff8a60" stroke-width=".9" opacity=".75"/>
<line x1="260.0" y1="561.8" x2="271.2" y2="564.8" stroke="#ff8a60" stroke-width=".9" opacity=".75"/>
<line x1="260.2" y1="560.7" x2="271.7" y2="561.7" stroke="#ff8a60" stroke-width=".9" opacity=".75"/>
<path d="M251.8,541.2 L251.8,562.4 L273.2,562.4" fill="none" stroke="#f03a18" stroke-width="1.2"/>
</g>
<text x="291" y="580.2" font-family="Liberation Sans,sans-serif" font-weight="bold" font-size="6.4" fill="#3a3a3a" textLength="24" lengthAdjust="spacingAndGlyphs">ROTATE</text>
<text x="352.6" y="580.2" font-family="Liberation Sans,sans-serif" font-weight="bold" font-size="6.4" fill="#3a3a3a" textLength="11.6" lengthAdjust="spacingAndGlyphs">PAN</text>
<text x="405" y="580.2" font-family="Liberation Sans,sans-serif" font-weight="bold" font-size="6.4" fill="#3a3a3a" textLength="17.2" lengthAdjust="spacingAndGlyphs">ZOOM</text>
<line x1="287.4" y1="507" x2="287.4" y2="520.4" stroke="#8c8c8c" stroke-width="1.4"/><line x1="268.8" y1="526" x2="281.6" y2="526" stroke="#8c8c8c" stroke-width="1.4"/>
<rect x="281.6" y="520" width="12" height="11.6" fill="#52dc52"/>
<text x="285" y="500" font-family="Liberation Sans,sans-serif" font-weight="bold" fill="#0a0a0a" font-size="8.4" textLength="6.2" lengthAdjust="spacingAndGlyphs">Z</text>
<text x="284.2" y="528.8" font-family="Liberation Sans,sans-serif" font-weight="bold" fill="#0a0a0a" font-size="8.8" textLength="6.8" lengthAdjust="spacingAndGlyphs">Y</text>
<text x="256" y="528.4" font-family="Liberation Sans,sans-serif" fill="#0a0a0a" stroke="#0a0a0a" stroke-width=".25" font-size="8.6" textLength="6.6" lengthAdjust="spacingAndGlyphs">X</text>
<path d="M238,80 L238,86.2 L233.8,83.1Z" fill="#0a0a0a"/>
<path d="M211.6,461.6 L220.4,461.6 L216,466Z" fill="#0a0a0a"/>
<path d="M49.6,472.4 L52.4,475 L55.2,472.4" fill="none" stroke="#a8a8a8" stroke-width=".8"/>
<rect x="102.6" y="472" width="1" height="19" fill="#e8e8e8"/>
<path d="M979.4,12.4 L986.8,12.4" stroke="#1a1a1a" stroke-width="1"/>
<rect x="1014.4" y="8.2" width="7.6" height="7.6" fill="none" stroke="#1a1a1a" stroke-width="1"/>
<path d="M1051,8 L1058.8,15.8 M1058.8,8 L1051,15.8" stroke="#1a1a1a" stroke-width="1"/>
<text x="6.4" y="12.2" font-family="Liberation Serif,serif" font-weight="bold" font-size="9.6" fill="#b43c1c" textLength="6.4" lengthAdjust="spacingAndGlyphs">D</text>
<text x="12" y="11" font-family="Liberation Serif,serif" font-weight="bold" font-size="9" fill="#c8401c" textLength="6.4" lengthAdjust="spacingAndGlyphs">P</text>
<path d="M16.6,7 L12.2,16.4" stroke="#e03a20" stroke-width="1.1"/>
<text x="11.2" y="17.6" font-family="Liberation Serif,serif" font-style="italic" font-size="3.4" fill="#d84a3a" textLength="7.4" lengthAdjust="spacingAndGlyphs">Proto</text>
<rect x="310.0" y="586" width="1" height="16" fill="#d4d4d4"/>
<rect x="622.0" y="586" width="1" height="16" fill="#d4d4d4"/>
<rect x="933.5" y="586" width="1" height="16" fill="#d4d4d4"/>
<rect x="975.7" y="586" width="1" height="16" fill="#d4d4d4"/>
<rect x="1017.1" y="586" width="1" height="16" fill="#d4d4d4"/>
<rect x="1058.3" y="586" width="1" height="16" fill="#d4d4d4"/>
<rect x="1069" y="600.4" width="1.3" height="1.3" fill="#b0b0b0"/>
<rect x="1066.4" y="600.4" width="1.3" height="1.3" fill="#b0b0b0"/>
<rect x="1063.8" y="600.4" width="1.3" height="1.3" fill="#b0b0b0"/>
<rect x="1069" y="597.8" width="1.3" height="1.3" fill="#b0b0b0"/>
<rect x="1066.4" y="597.8" width="1.3" height="1.3" fill="#b0b0b0"/>
<rect x="1069" y="595.2" width="1.3" height="1.3" fill="#b0b0b0"/>
<g><path d="M4,93.4 L4,101.6 M4,93.8 L8,93.8 M14.6,93 L14.6,101.6 M9,96 L15,96 M9,96 L9,99.6" fill="none" stroke="#17344e" stroke-width="1.5"/><rect x="9.4" y="90" width="1.6" height="5" fill="#1c5a8c"/><rect x="12.4" y="89.6" width="1.6" height="5.6" fill="#1c5a8c"/><rect x="4.2" y="90.6" width="3.6" height="2" fill="#3cb4dc"/><rect x="9.4" y="92" width="5" height="1.4" fill="#3cb4dc"/><rect x="10" y="97.2" width="4" height="2.6" fill="#2a6a98"/></g>
<path d="M5.2,109.4 L8.4,112.8 L11.6,109.4" fill="none" stroke="#3c3c3c" stroke-width="1.1"/>
<path d="M24,107.2 C28.4,107.2 28.6,112.0 26,113.8 L25.8,114.60000000000001 L22.2,114.60000000000001 L22,113.8 C19.4,112.0 19.6,107.2 24,107.2Z" fill="#e6ee5a" stroke="#c8cc3a" stroke-width=".5"/><ellipse cx="23.2" cy="110.0" rx="1.6" ry="1.8" fill="#f8fcae" opacity=".8"/><rect x="22.3" y="114.60000000000001" width="3.4" height="2.4" rx=".6" fill="#5a5a2a"/>
<path d="M40.2,122.6 C44.6,122.6 44.800000000000004,127.39999999999999 42.2,129.2 L42.0,130.0 L38.400000000000006,130.0 L38.2,129.2 C35.6,127.39999999999999 35.800000000000004,122.6 40.2,122.6Z" fill="#e6ee5a" stroke="#c8cc3a" stroke-width=".5"/><ellipse cx="39.400000000000006" cy="125.39999999999999" rx="1.6" ry="1.8" fill="#f8fcae" opacity=".8"/><rect x="38.5" y="130.0" width="3.4" height="2.4" rx=".6" fill="#5a5a2a"/>
<path d="M38.6,105.6 L40,105.6 L40,118 L37.4,118 L37.4,114.4 L35.4,113 L35.4,110 L37.6,109 Z" fill="#b04848" stroke="#8a3434" stroke-width=".4"/><path d="M41.2,106.4 L43.2,106.4 L43.2,109.4 L45.8,112 L43.2,114.8 L43.2,117.6 L41.2,117.6Z" fill="#a4bccc" stroke="#7c98ac" stroke-width=".4"/>
<rect x="50.6" y="121.4" width="1.4" height="3.4" fill="#6a7a8a"/><path d="M50.2,127.4 L56,126.2 L56,130.2 L50.2,130Z" fill="#2a2a2a"/><path d="M51.4,131.6 L51.4,133.8" stroke="#8a9aa8" stroke-width=".8"/><circle cx="58.6" cy="129.6" r="3.9" fill="#e0201c"/><path d="M56.8,127.8 L60.4,131.4 M60.4,127.8 L56.8,131.4" stroke="#fff" stroke-width="1.2"/>
<rect x="0" y="88" width="1" height="16" fill="#8eb8d8"/>
</svg>
<svg id="rat" style="left:540px;top:200px" width="250" height="230" viewBox="540 200 250 230">
<defs>
<clipPath id="rc"><path d="M564.8,249.7C565.3,249.0 565.3,247.0 567.8,245.3C570.3,243.6 576.2,241.0 579.7,239.3C583.2,237.6 585.4,236.5 588.6,234.9C591.8,233.3 595.5,231.1 599.0,229.7C602.5,228.3 605.6,227.3 609.3,226.4C613.0,225.5 617.8,224.9 621.2,224.5C624.6,224.1 627.9,225.0 629.6,223.9C631.3,222.8 630.7,219.4 631.6,217.8C632.5,216.2 634.1,214.6 635.3,214.6C636.5,214.6 638.1,216.2 639.0,217.8C639.9,219.5 639.5,223.1 640.5,224.5C641.5,225.9 643.4,225.7 645.0,226.0C646.6,226.3 647.9,227.2 650.0,226.5C652.1,225.8 655.0,222.6 657.4,221.5C659.8,220.4 662.2,219.5 664.1,220.0C666.0,220.5 667.4,222.4 668.5,224.5C669.6,226.6 670.2,230.2 670.8,232.6C671.4,234.9 670.3,236.6 672.3,238.6C674.3,240.6 678.9,242.9 682.6,244.5C686.3,246.1 690.5,246.6 694.5,248.2C698.5,249.8 702.9,252.1 706.4,254.2C709.9,256.3 712.3,258.0 715.3,260.8C718.3,263.6 721.5,267.7 724.2,271.2C726.9,274.7 729.5,278.4 731.6,281.6C733.7,284.8 735.2,287.2 736.8,290.4C738.4,293.6 740.0,297.1 741.2,300.8C742.4,304.5 743.6,308.2 744.2,312.6C744.8,317.1 744.6,322.6 744.9,327.5C745.1,332.4 745.2,338.4 745.7,342.3C746.2,346.2 747.5,347.9 747.9,351.2C748.3,354.5 748.4,358.2 748.3,362.0C748.2,365.8 747.9,370.0 747.2,373.7C746.5,377.4 745.5,380.6 744.2,384.1C743.0,387.6 741.2,391.4 739.7,394.5C738.2,397.6 734.4,401.3 735.3,402.9C736.2,404.4 742.0,403.4 745.0,403.8C748.0,404.2 750.8,404.6 753.1,405.2C755.4,405.8 757.5,405.9 759.0,407.1C760.5,408.3 761.6,410.7 762.0,412.3C762.4,413.9 761.7,415.8 761.2,416.8C760.7,417.8 759.4,418.0 759.0,418.2L627.5,418.2C627.5,417.6 626.7,415.9 627.2,414.5C627.7,413.1 628.8,411.3 630.4,410.1C632.0,408.9 637.3,409.5 637.1,407.1C636.9,404.8 631.4,399.6 629.0,396.0C626.6,392.4 624.6,389.3 623.0,385.6C621.4,381.9 620.0,377.6 619.3,373.7C618.6,369.8 618.5,365.8 618.9,361.9C619.3,357.9 620.4,353.7 621.5,350.0C622.6,346.3 624.9,343.1 625.6,339.7C626.3,336.2 626.2,333.0 625.6,329.3C625.0,325.6 622.9,321.2 621.9,317.5C620.9,313.8 620.0,310.3 619.7,307.1C619.5,303.9 621.0,300.3 620.4,298.2C619.8,296.1 618.2,296.0 616.0,294.5C613.8,293.0 610.3,291.3 607.1,289.3C603.9,287.3 600.4,284.7 596.7,282.6C593.0,280.5 588.5,278.7 584.8,276.7C581.1,274.7 577.1,273.1 574.5,270.7C571.9,268.3 570.8,264.7 569.3,262.3C567.8,259.9 566.2,257.4 565.6,256.4Z"/></clipPath>
<filter id="b1" filterUnits="userSpaceOnUse" x="540" y="200" width="250" height="230"><feGaussianBlur stdDeviation="1"/></filter>
<filter id="b2" filterUnits="userSpaceOnUse" x="540" y="200" width="250" height="230"><feGaussianBlur stdDeviation="2"/></filter>
<filter id="b3" filterUnits="userSpaceOnUse" x="540" y="200" width="250" height="230"><feGaussianBlur stdDeviation="3"/></filter>
<filter id="b5" filterUnits="userSpaceOnUse" x="540" y="200" width="250" height="230"><feGaussianBlur stdDeviation="5"/></filter>
<filter id="b8" filterUnits="userSpaceOnUse" x="540" y="200" width="250" height="230"><feGaussianBlur stdDeviation="8"/></filter>
<filter id="b10" filterUnits="userSpaceOnUse" x="540" y="200" width="250" height="230"><feGaussianBlur stdDeviation="10"/></filter>
<linearGradient id="tailg" x1="0" y1="0" x2="0" y2="1"><stop offset="0" stop-color="#1fb4b4"/><stop offset=".35" stop-color="#34d8d8"/><stop offset=".7" stop-color="#22bcbc"/><stop offset="1" stop-color="#0a6c6c"/></linearGradient>
</defs>
<path d="M564.8,249.7C565.3,249.0 565.3,247.0 567.8,245.3C570.3,243.6 576.2,241.0 579.7,239.3C583.2,237.6 585.4,236.5 588.6,234.9C591.8,233.3 595.5,231.1 599.0,229.7C602.5,228.3 605.6,227.3 609.3,226.4C613.0,225.5 617.8,224.9 621.2,224.5C624.6,224.1 627.9,225.0 629.6,223.9C631.3,222.8 630.7,219.4 631.6,217.8C632.5,216.2 634.1,214.6 635.3,214.6C636.5,214.6 638.1,216.2 639.0,217.8C639.9,219.5 639.5,223.1 640.5,224.5C641.5,225.9 643.4,225.7 645.0,226.0C646.6,226.3 647.9,227.2 650.0,226.5C652.1,225.8 655.0,222.6 657.4,221.5C659.8,220.4 662.2,219.5 664.1,220.0C666.0,220.5 667.4,222.4 668.5,224.5C669.6,226.6 670.2,230.2 670.8,232.6C671.4,234.9 670.3,236.6 672.3,238.6C674.3,240.6 678.9,242.9 682.6,244.5C686.3,246.1 690.5,246.6 694.5,248.2C698.5,249.8 702.9,252.1 706.4,254.2C709.9,256.3 712.3,258.0 715.3,260.8C718.3,263.6 721.5,267.7 724.2,271.2C726.9,274.7 729.5,278.4 731.6,281.6C733.7,284.8 735.2,287.2 736.8,290.4C738.4,293.6 740.0,297.1 741.2,300.8C742.4,304.5 743.6,308.2 744.2,312.6C744.8,317.1 744.6,322.6 744.9,327.5C745.1,332.4 745.2,338.4 745.7,342.3C746.2,346.2 747.5,347.9 747.9,351.2C748.3,354.5 748.4,358.2 748.3,362.0C748.2,365.8 747.9,370.0 747.2,373.7C746.5,377.4 745.5,380.6 744.2,384.1C743.0,387.6 741.2,391.4 739.7,394.5C738.2,397.6 734.4,401.3 735.3,402.9C736.2,404.4 742.0,403.4 745.0,403.8C748.0,404.2 750.8,404.6 753.1,405.2C755.4,405.8 757.5,405.9 759.0,407.1C760.5,408.3 761.6,410.7 762.0,412.3C762.4,413.9 761.7,415.8 761.2,416.8C760.7,417.8 759.4,418.0 759.0,418.2L627.5,418.2C627.5,417.6 626.7,415.9 627.2,414.5C627.7,413.1 628.8,411.3 630.4,410.1C632.0,408.9 637.3,409.5 637.1,407.1C636.9,404.8 631.4,399.6 629.0,396.0C626.6,392.4 624.6,389.3 623.0,385.6C621.4,381.9 620.0,377.6 619.3,373.7C618.6,369.8 618.5,365.8 618.9,361.9C619.3,357.9 620.4,353.7 621.5,350.0C622.6,346.3 624.9,343.1 625.6,339.7C626.3,336.2 626.2,333.0 625.6,329.3C625.0,325.6 622.9,321.2 621.9,317.5C620.9,313.8 620.0,310.3 619.7,307.1C619.5,303.9 621.0,300.3 620.4,298.2C619.8,296.1 618.2,296.0 616.0,294.5C613.8,293.0 610.3,291.3 607.1,289.3C603.9,287.3 600.4,284.7 596.7,282.6C593.0,280.5 588.5,278.7 584.8,276.7C581.1,274.7 577.1,273.1 574.5,270.7C571.9,268.3 570.8,264.7 569.3,262.3C567.8,259.9 566.2,257.4 565.6,256.4Z" fill="#1fb8b8" stroke="#1a9c9c" stroke-width=".6"/>
<g clip-path="url(#rc)">
 <!-- broad highlights -->
 <ellipse cx="662" cy="318" rx="26" ry="60" fill="#40e2e2" opacity=".8" filter="url(#b10)" transform="rotate(-30 662 318)"/>
 <ellipse cx="650" cy="383" rx="26" ry="20" fill="#40e2e2" opacity=".8" filter="url(#b8)"/>
 <ellipse cx="688" cy="345" rx="14" ry="30" fill="#3cdede" opacity=".55" filter="url(#b8)"/>
 <ellipse cx="690" cy="290" rx="14" ry="22" fill="#38d8d8" opacity=".4" filter="url(#b8)"/>
 <ellipse cx="598" cy="252" rx="20" ry="9" fill="#40e2e2" opacity=".75" filter="url(#b5)" transform="rotate(-18 598 252)"/>
 <ellipse cx="575" cy="251" rx="8" ry="6" fill="#40e2e2" opacity=".55" filter="url(#b3)"/>
 <ellipse cx="612" cy="238" rx="12" ry="6" fill="#38dada" opacity=".5" filter="url(#b3)"/>
 <!-- upper back medium shadow -->
 <path d="M640,226 C665,232 700,244 730,280" fill="none" stroke="#0f8484" stroke-width="12" opacity=".5" filter="url(#b3)"/>
 <!-- right side broad shadow -->
 <path d="M700,250 C716,275 712,310 708,340 C704,368 698,388 682,400 L740,412 L770,380 L770,300 L740,255Z" fill="#0a5a5a" opacity=".8" filter="url(#b8)"/>
 <path d="M722,268 C732,290 728,320 725,345 C722,372 716,392 702,402 L740,410 L765,380 L765,300 L745,270Z" fill="#043434" opacity=".85" filter="url(#b5)"/>
 <path d="M672,238 C700,246 722,264 737,291 C748,315 744,335 748,355 C750,380 742,392 735,403" fill="none" stroke="#0a5050" stroke-width="16" opacity=".6" filter="url(#b3)"/>
 <path d="M672,238 C700,246 722,264 737,291 C748,315 744,335 748,355 C750,380 742,392 735,403" fill="none" stroke="#001010" stroke-width="8" opacity=".95" filter="url(#b2)"/>
 <path d="M672,238 C700,246 722,264 737,291 C748,315 744,335 748,355 C750,380 742,392 735,403" fill="none" stroke="#000" stroke-width="2.4" opacity=".9" filter="url(#b1)"/>
 <!-- head lower shading -->
 <path d="M568,262 C585,275 605,282 622,292 L634,250 C620,262 590,262 570,254Z" fill="#109090" opacity=".45" filter="url(#b3)"/>
 <path d="M600,232 C612,228 622,227 630,227 L627,244 C618,240 608,238 600,240Z" fill="#129494" opacity=".35" filter="url(#b2)"/>
 <path d="M636,240 C630,255 624,272 620,296" fill="none" stroke="#0a6a6a" stroke-width="3.5" opacity=".8" filter="url(#b2)"/>
 <path d="M623,345 C632,346 642,349 652,354" fill="none" stroke="#118c8c" stroke-width="4" opacity=".5" filter="url(#b3)"/>
 <!-- neck crease / shoulder -->
 <path d="M641,228 C634,244 626,268 622,296" fill="none" stroke="#0e8585" stroke-width="6" opacity=".75" filter="url(#b3)"/>
 <path d="M621,296 C620,310 628,326 625,342" fill="none" stroke="#118e8e" stroke-width="5" opacity=".6" filter="url(#b3)"/>
 <path d="M632,298 C630,310 634,322 633,334" fill="none" stroke="#13908f" stroke-width="3" opacity=".55" filter="url(#b2)"/>
 <!-- under chin shadow -->
 <path d="M565,257 C575,273 600,285 621,299" fill="none" stroke="#0a6262" stroke-width="8" opacity=".8" filter="url(#b3)"/>
 <path d="M566,250 C572,256 580,258 590,262" fill="none" stroke="#0f8a8a" stroke-width="2" opacity=".5" filter="url(#b1)"/>
 <path d="M583,238 C588,236 592,238 594,242" fill="none" stroke="#0f8a8a" stroke-width="1.6" opacity=".6" filter="url(#b1)"/>
 <!-- lower left body edge -->
 <path d="M621,350 C614,375 622,398 640,412" fill="none" stroke="#0b7070" stroke-width="6" opacity=".7" filter="url(#b3)"/>
 <!-- hind leg / feet -->
 <path d="M636,404 C646,402 656,402 660,403 L672,419 L627,419 L627,413Z" fill="#16a4a4" opacity=".9" filter="url(#b1)"/>
 <path d="M640,404 C650,409 658,413 664,419" fill="none" stroke="#064646" stroke-width="3" opacity=".85" filter="url(#b1)"/>
 <path d="M659,401 C664,407 668,413 672,419" fill="none" stroke="#075252" stroke-width="2.4" opacity=".8" filter="url(#b1)"/>
 <path d="M628,417 C630,411 635,409 639,410" fill="none" stroke="#3adada" stroke-width="2" opacity=".7" filter="url(#b1)"/>
 <!-- bottom shadow of body over tail -->
 <path d="M684,396 C705,397 722,400 741,404" fill="none" stroke="#032c2c" stroke-width="9" opacity=".9" filter="url(#b3)"/>
 <!-- tail -->
 <path d="M671,419 C669.5,408 674,401.5 684,400.6 C700,399.6 720,403 741,404.4 C752,405 761,406.5 762.4,411.5 C763,415 761,419 759,419Z" fill="url(#tailg)" filter="url(#b1)"/>
 <path d="M742,404.4 C757,405 764,410 761,420" fill="none" stroke="#033030" stroke-width="5" opacity=".85" filter="url(#b2)"/>
 <!-- second ear -->
 <path d="M650,227 C656,222 662,219.5 665,220.5 C669,222 671,230 672.4,239 L660,232Z" fill="#1aa8a8"/>
 <path d="M663.6,219.6 C668.4,221.4 670.6,230 672,239" fill="none" stroke="#043c3c" stroke-width="4.5" opacity=".9" filter="url(#b1)"/>
 <!-- front ear -->
 <path d="M635.7,214.3 C631.6,215.6 630.6,222 629.8,228 C628.8,236 626,242 624,246.4 C626.6,248.6 632.4,245.6 636.4,239.4 C640.6,232.6 641.6,222 639.9,217.8 C638.9,215.3 637.2,214.3 635.7,214.3Z" fill="#0a6464"/>
 <path d="M637.6,217 C639.6,222 638.6,231 635,238 C632.6,242.4 629,245.6 626,246.6" fill="none" stroke="#064a4a" stroke-width="2" opacity=".8" filter="url(#b1)"/>
 <path d="M634.3,216.6 C631.8,219 631.8,226 630.3,232 C629.3,238 626.8,243 625.2,246" fill="none" stroke="#2ccccc" stroke-width="2.4" opacity=".9" filter="url(#b1)"/>
 <path d="M635.4,214.6 C637.8,214.6 639.4,216.4 640,219" fill="none" stroke="#23b8b8" stroke-width="1.2" opacity=".8"/>
 <!-- subtle mottling -->
 <ellipse cx="672" cy="300" rx="9" ry="14" fill="#44e6e6" opacity=".35" filter="url(#b3)" transform="rotate(-30 672 300)"/>
 <ellipse cx="655" cy="345" rx="8" ry="12" fill="#18a8a8" opacity=".25" filter="url(#b3)"/>
 <ellipse cx="680" cy="372" rx="10" ry="9" fill="#44e6e6" opacity=".3" filter="url(#b3)"/>
 <ellipse cx="700" cy="318" rx="6" ry="14" fill="#18a8a8" opacity=".22" filter="url(#b3)"/>
</g>
</svg>
<div class="t" style="left:22.26px;top:7px;font-size:10px;letter-spacing:0.010px">Untitled</div>
<div class="t" style="left:58.86px;top:7px;font-size:10px;letter-spacing:0.000px">-</div>
<div class="t" style="left:64.28px;top:7px;font-size:10px;letter-spacing:-0.422px">DeskProto</div>
<div class="t" style="left:109.54px;top:7px;font-size:10px;letter-spacing:-0.388px">7.0</div>
<div class="t" style="left:124.66px;top:7px;font-size:10px;letter-spacing:0.000px">-</div>
<div class="t" style="left:129.88px;top:7px;font-size:10px;letter-spacing:-0.649px">Dealer</div>
<div class="t" style="left:158.61px;top:7px;font-size:10px;letter-spacing:-0.480px">license:</div>
<div class="t" style="left:191.57px;top:7px;font-size:10px;letter-spacing:0.263px">Not</div>
<div class="t" style="left:210.15px;top:7px;font-size:10px;letter-spacing:-0.548px">For</div>
<div class="t" style="left:225.85px;top:7px;font-size:10px;letter-spacing:-0.799px">Resale!</div>
<div class="t" style="left:5.89px;top:27px;font-size:9.6px;letter-spacing:0.026px">File</div>
<div class="t" style="left:32.69px;top:27px;font-size:9.6px;letter-spacing:-0.075px">Edit</div>
<div class="t" style="left:61.59px;top:27px;font-size:9.6px;letter-spacing:-0.314px">View</div>
<div class="t" style="left:93.59px;top:27px;font-size:9.6px;letter-spacing:-0.296px">Parameters</div>
<div class="t" style="left:153.42px;top:27px;font-size:9.6px;letter-spacing:-0.351px">Create</div>
<div class="t" style="left:192.72px;top:27px;font-size:9.6px;letter-spacing:0.042px">Options</div>
<div class="t" style="left:238.00px;top:27px;font-size:9.6px;letter-spacing:0.244px">Help</div>
<div class="t" style="left:0.39px;top:75px;font-size:9.6px;letter-spacing:-0.329px">Project Tree</div>
<div class="t" style="left:19.96px;top:91px;font-size:9.6px;letter-spacing:0.212px">Untitled</div>
<div class="t" style="left:50.79px;top:106px;font-size:9.6px;letter-spacing:-0.192px">Part</div>
<div class="t" style="left:67.52px;top:122px;font-size:9.6px;letter-spacing:-0.085px">Geometry operation</div>
<div class="t" style="left:0.28px;top:459px;font-size:9.6px;letter-spacing:-0.563px">NC Files</div>
<div class="t" style="left:3.08px;top:475px;font-size:9.6px;letter-spacing:0.759px">Name</div>
<div class="t" style="left:105.09px;top:475px;font-size:9.6px;letter-spacing:0.426px">Date</div>
<div class="t" style="left:0.09px;top:589px;font-size:9.6px;letter-spacing:-0.478px">For Help, press F1</div>
<div class="t" style="left:315.52px;top:589px;font-size:9.6px;letter-spacing:-0.401px">Geometry file:</div>
<div class="t" style="left:370.89px;top:589px;font-size:9.6px;letter-spacing:-0.474px">D:\Freedesignwold</div>
<div class="t" style="left:442.87px;top:589px;font-size:9.6px;letter-spacing:-0.478px">\1.working\New</div>
<div class="t" style="left:505.68px;top:589px;font-size:9.6px;letter-spacing:-0.510px">fold…\Rat_01_32mm.stl</div>
<div class="t" style="left:625.80px;top:589px;font-size:9.6px;letter-spacing:-0.628px">Machine: ISO plain G-codes - mm</div>
<div class="t" style="left:946.17px;top:589px;font-size:9.6px;letter-spacing:-0.306px">-5.40</div>
<div class="t" style="left:986.71px;top:589px;font-size:9.6px;letter-spacing:-0.051px">&lt; Y &gt;</div>
<div class="t" style="left:1028.37px;top:589px;font-size:9.6px;letter-spacing:-0.188px">-6.78</div>
</div>
<div id="bg1"></div><div id="bg2"></div><div id="bg3"></div><div id="blob"></div><div id="cb"></div><div id="rb"></div><div id="bb"></div><div id="topline"></div>

</body></html>
